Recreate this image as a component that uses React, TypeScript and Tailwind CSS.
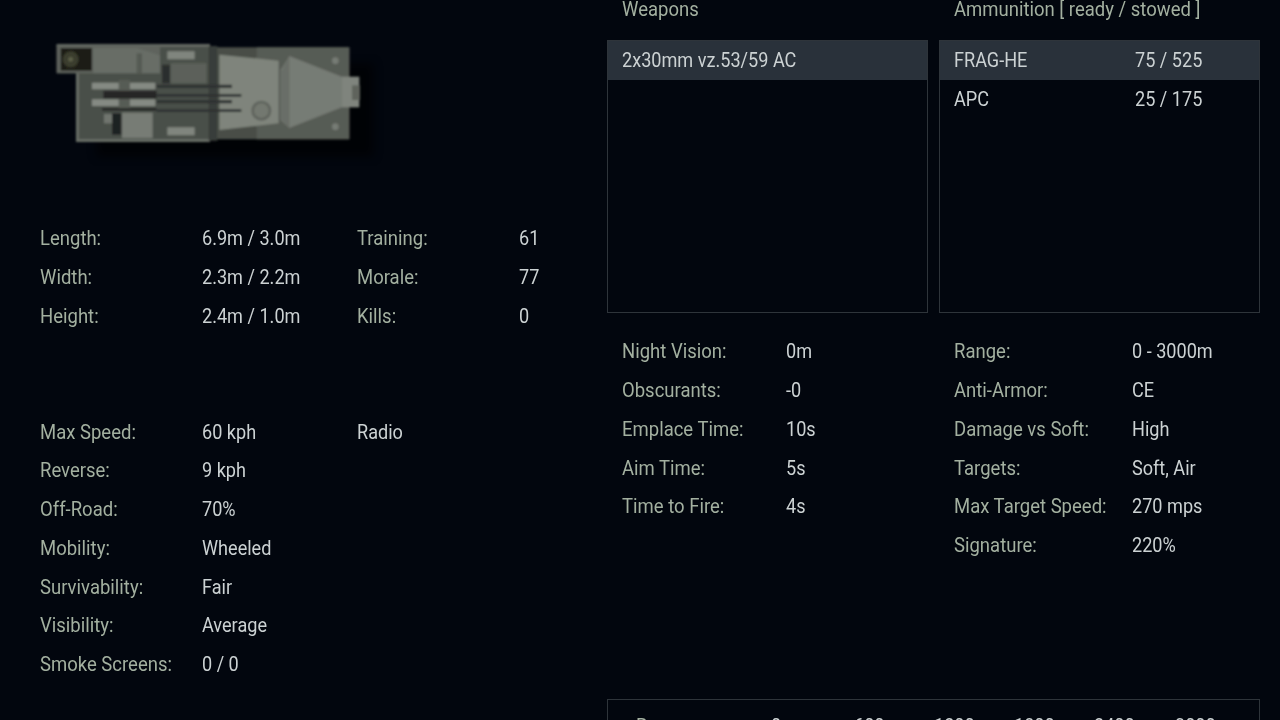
const font = { fontFamily: "Roboto, 'Liberation Sans', sans-serif" };

type Row = [string, string];

const hull: Row[] = [
  ["Length:", "6.9m / 3.0m"],
  ["Width:", "2.3m / 2.2m"],
  ["Height:", "2.4m / 1.0m"],
];
const crew: Row[] = [
  ["Training:", "61"],
  ["Morale:", "77"],
  ["Kills:", "0"],
];
const movement: Row[] = [
  ["Max Speed:", "60 kph"],
  ["Reverse:", "9 kph"],
  ["Off-Road:", "70%"],
  ["Mobility:", "Wheeled"],
  ["Survivability:", "Fair"],
  ["Visibility:", "Average"],
  ["Smoke Screens:", "0 / 0"],
];
const weaponStats: Row[] = [
  ["Night Vision:", "0m"],
  ["Obscurants:", "-0"],
  ["Emplace Time:", "10s"],
  ["Aim Time:", "5s"],
  ["Time to Fire:", "4s"],
];
const ammoStats: Row[] = [
  ["Range:", "0 - 3000m"],
  ["Anti-Armor:", "CE"],
  ["Damage vs Soft:", "High"],
  ["Targets:", "Soft, Air"],
  ["Max Target Speed:", "270 mps"],
  ["Signature:", "220%"],
];

function Txt({ children, label }: { children: React.ReactNode; label?: boolean }) {
  return (
    <span
      className={`block origin-left whitespace-nowrap text-[20px] leading-[24px] ${
        label ? "scale-x-[0.925] text-[#a3b0a0]" : "scale-x-[0.905] text-[#ccd2d3]"
      }`}
    >
      {children}
    </span>
  );
}

function Stats({ rows, keyWidth }: { rows: Row[]; keyWidth: string }) {
  return (
    <div className="flex flex-col">
      {rows.map(([k, v]) => (
        <div key={k} className="flex h-[38.75px] items-center">
          <div className={keyWidth}>
            <Txt label>{k}</Txt>
          </div>
          <Txt>{v}</Txt>
        </div>
      ))}
    </div>
  );
}

function Vehicle() {
  return (
    <svg viewBox="0 0 1080 450" className="h-[150px] w-[360px]">
      <defs>
        <filter id="soft">
          <feGaussianBlur stdDeviation="2.6" />
        </filter>
        <filter id="shadow">
          <feGaussianBlur stdDeviation="14" />
        </filter>
      </defs>
      <path d="M200 130H1030V410H200Z" fill="#000" opacity="0.6" filter="url(#shadow)" />
      <g filter="url(#soft)">
        <path d="M80 74H540V366H140V160H80Z" fill="#4a4f49" />
        <path d="M540 82H958V358H540Z" fill="#484d47" />
        <path d="M680 82H958V358H680Z" fill="#565b54" />
        <path d="M140 358H540V366H140ZM138 160H146V366H138Z" fill="#6a6f68" />
        <path d="M80 72H540V80H80Z" fill="#666b64" />
        <path d="M80 76H390V160H80Z" fill="#5f645d" />
        <path d="M92 84H186V152H92Z" fill="#1a1b14" />
        <circle cx="122" cy="118" r="24" fill="#3b3e2e" />
        <circle cx="122" cy="118" r="7" fill="#5d6048" />
        <path d="M190 84H320L390 106V160H190Z" fill="#686d66" />
        <path d="M320 100H336V160H320Z" fill="#555a53" />
        <path d="M412 94H494V118H412ZM412 322H494V346H412Z" fill="#80857e" />
        <path d="M396 134H420V190H396Z" fill="#2c2e2e" />
        <path d="M422 130H530V190H422Z" fill="#5c615a" />
        <path d="M536 78H562V362H536Z" fill="#393c3a" />
        <path d="M186 188H376V208H186ZM186 238H376V258H186Z" fill="#858a83" />
        <path d="M266 180H300V268H266Z" fill="#565b54" />
        <path d="M220 212H380V236H220ZM216 264H380V272H216Z" fill="#252727" />
        <path d="M222 282H246V310H222Z" fill="#70756e" />
        <path d="M246 280H274V344H246Z" fill="#1e2022" />
        <path d="M276 278H368V354H276Z" fill="#777c75" />
        <path d="M568 104L746 122V310L568 330Z" fill="#7f847c" />
        <path d="M380 194H606V204H380ZM380 222H634V230H380ZM380 240H606V250H380ZM380 268H634V276H380Z" fill="#2e3132" />
        <circle cx="694" cy="272" r="30" fill="#5f645d" />
        <circle cx="694" cy="272" r="22" fill="#73786f" />
        <path d="M778 108L936 170V262L778 324L752 300V150Z" fill="#767b74" />
        <path d="M754 154L778 108V324L754 298Z" fill="#696e67" />
        <path d="M936 170H988V262H936Z" fill="#7f847d" />
        <path d="M966 196H990V240H966Z" fill="#5e635c" />
        <circle cx="916" cy="122" r="10" fill="#767b74" />
        <circle cx="916" cy="320" r="10" fill="#767b74" />
      </g>
    </svg>
  );
}

export default function App() {
  return (
    <div className="flex h-screen overflow-hidden bg-[#02060e]" style={font}>
      <div className="w-[607px] shrink-0">
        <div className="pl-[30px] pt-[20px]">
          <Vehicle />
        </div>
        <div className="flex pl-10 pt-[49px]">
          <div className="w-[317px]">
            <Stats rows={hull} keyWidth="w-[162px]" />
          </div>
          <Stats rows={crew} keyWidth="w-[162px]" />
        </div>
        <div className="flex pl-10 pt-[77px]">
          <div className="w-[317px]">
            <Stats rows={movement} keyWidth="w-[162px]" />
          </div>
          <div className="flex h-[38.75px] items-center">
            <Txt>Radio</Txt>
          </div>
        </div>
      </div>

      <div className="w-[653px] shrink-0">
        <div className="grid grid-cols-2 gap-x-[11px]">
          <div>
            <div className="flex h-10 items-center pb-[22px] pl-[15px]">
              <Txt label>Weapons</Txt>
            </div>
            <div className="h-[273px] border border-[#2e343a]">
              <div className="flex h-[39px] items-center bg-[#29313a] pb-[2px] pl-[14px]">
                <Txt>2x30mm vz.53/59 AC</Txt>
              </div>
            </div>
            <div className="pl-[15px] pt-[19px]">
              <Stats rows={weaponStats} keyWidth="w-[164px]" />
            </div>
          </div>
          <div>
            <div className="flex h-10 items-center pb-[22px] pl-[15px]">
              <Txt label>Ammunition [ ready / stowed ]</Txt>
            </div>
            <div className="h-[273px] border border-[#2e343a]">
              <div className="flex h-[39px] items-center bg-[#29313a] pb-[2px] pl-[14px]">
                <div className="w-[181px]">
                  <Txt>FRAG-HE</Txt>
                </div>
                <Txt>75 / 525</Txt>
              </div>
              <div className="flex h-[39px] items-center pb-[2px] pl-[14px]">
                <div className="w-[181px]">
                  <Txt>APC</Txt>
                </div>
                <Txt>25 / 175</Txt>
              </div>
            </div>
            <div className="pl-[15px] pt-[19px]">
              <Stats rows={ammoStats} keyWidth="w-[178px]" />
            </div>
          </div>
        </div>
        <div className="mt-[134.5px] h-[60px] border border-[#2e343a] pl-[28px] pt-[14px]">
          <div className="flex">
            <div className="w-[135px]">
              <Txt label>Range</Txt>
            </div>
            <div className="w-[83px]"><Txt>0</Txt></div>
            <div className="w-[80px]"><Txt>600</Txt></div>
            <div className="w-[80px]"><Txt>1200</Txt></div>
            <div className="w-[80px]"><Txt>1800</Txt></div>
            <div className="w-[81px]"><Txt>2400</Txt></div>
            <Txt>3000</Txt>
          </div>
        </div>
      </div>
    </div>
  );
}
